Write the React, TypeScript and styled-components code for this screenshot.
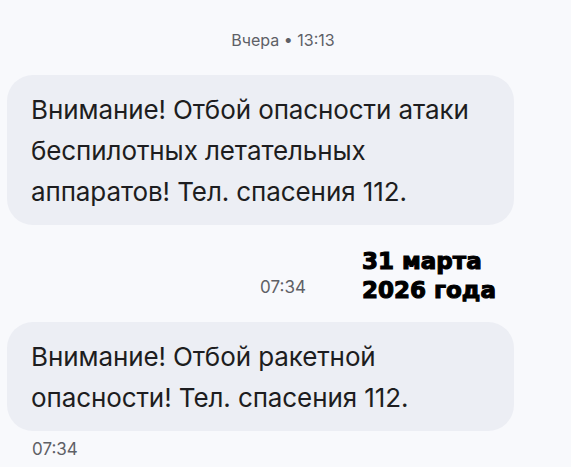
import styled, { createGlobalStyle } from "styled-components";

const GlobalStyle = createGlobalStyle`
  html, body {
    margin: 0;
    padding: 0;
    background: #f8f9fc;
  }
  body {
    font-family: Inter, Roboto, "Noto Sans", sans-serif;
  }
`;

const Screen = styled.div`
  position: relative;
  width: 571px;
  height: 467px;
  overflow: hidden;
  background: #f8f9fc;
  display: flex;
  flex-direction: column;
  padding: 30px 57px 0 7px;
  box-sizing: border-box;
`;

const DateLabel = styled.div<{ $mt?: number; $size?: number }>`
  font-size: ${(p) => p.$size ?? 16}px;
  line-height: 20px;
  color: #5e6066;
  text-align: center;
  margin: ${(p) => p.$mt ?? 0}px -45px 25px 0;
`;

const Bubble = styled.div`
  background: #eceef4;
  border-radius: 26px;
  padding: 14px 16px 13px 24px;
  font-size: 26px;
  line-height: 41px;
  color: #1d1d20;
  letter-spacing: -0.1px;
`;

const Time = styled.div`
  font-size: 17px;
  line-height: 20px;
  color: #5e6066;
  margin: 8px 0 0 25px;
`;

const Stamp = styled.div`
  position: absolute;
  left: 362px;
  top: 247px;
  font-family: "DejaVu Sans", sans-serif;
  font-weight: 700;
  font-size: 23px;
  line-height: 29px;
  color: #000;
  -webkit-text-stroke: 1.1px #000;
`;

export default function App() {
  return (
    <>
      <GlobalStyle />
      <Screen>
        <DateLabel>Вчера • 13:13</DateLabel>
        <Bubble>
          Внимание! Отбой опасности атаки
          <br />
          беспилотных летательных
          <br />
          аппаратов! Тел. спасения 112.
        </Bubble>
        <DateLabel $mt={52} $size={17}>
          07:34
        </DateLabel>
        <Bubble>
          Внимание! Отбой ракетной
          <br />
          опасности! Тел. спасения 112.
        </Bubble>
        <Time>07:34</Time>
        <Stamp>
          31 марта
          <br />
          2026 года
        </Stamp>
      </Screen>
    </>
  );
}
